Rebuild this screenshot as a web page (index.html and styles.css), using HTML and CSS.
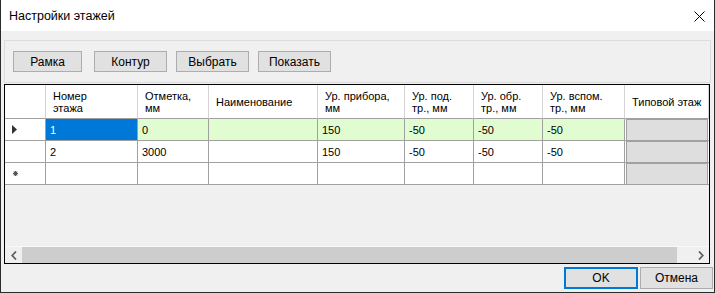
FILE: index.html
```html
<!DOCTYPE html>
<html lang="ru">
<head>
  <meta charset="UTF-8">
  <title>Настройки этажей</title>
  <link rel="stylesheet" href="styles.css">
</head>
<body>
  <div class="window">
    <div class="titlebar">
      <span class="title">Настройки этажей</span>
      <svg class="close" width="11" height="11" viewBox="0 0 11 11">
        <path d="M0.5 0.5 L10.5 10.5 M10.5 0.5 L0.5 10.5" stroke="#000" stroke-width="1" fill="none"/>
      </svg>
    </div>

    <div class="content">
      <!-- Кнопки сверху -->
      <div class="groupbox">
        <button class="btn btn-first">Рамка</button>
        <button class="btn">Контур</button>
        <button class="btn">Выбрать</button>
        <button class="btn">Показать</button>
      </div>

      <!-- Таблица этажей -->
      <div class="grid">
        <table class="floors">
          <thead>
            <tr>
              <th class="rowhead w-rh"></th>
              <th class="w-1">Номер<br>этажа</th>
              <th class="w-2">Отметка,<br>мм</th>
              <th class="w-3">Наименование</th>
              <th class="w-4">Ур. прибора,<br>мм</th>
              <th class="w-5">Ур. под.<br>тр., мм</th>
              <th class="w-6">Ур. обр.<br>тр., мм</th>
              <th class="w-7">Ур. вспом.<br>тр., мм</th>
              <th class="w-8">Типовой этаж</th>
            </tr>
          </thead>
          <tbody>
            <tr class="row-current">
              <td class="rowhead">
                <svg width="5" height="9" viewBox="0 0 5 9"><path d="M0 0 L5 4.5 L0 9 Z" fill="#333"/></svg>
              </td>
              <td class="selected">1</td>
              <td>0</td>
              <td></td>
              <td>150</td>
              <td>-50</td>
              <td>-50</td>
              <td>-50</td>
              <td class="flag"><div class="flag-box"></div></td>
            </tr>
            <tr>
              <td class="rowhead"></td>
              <td>2</td>
              <td>3000</td>
              <td></td>
              <td>150</td>
              <td>-50</td>
              <td>-50</td>
              <td>-50</td>
              <td class="flag"><div class="flag-box"></div></td>
            </tr>
            <tr>
              <td class="rowhead">
                <svg width="5" height="5" viewBox="0 0 5 5"><path d="M2.5 0 V5 M0 2.5 H5 M0.7 0.7 L4.3 4.3 M4.3 0.7 L0.7 4.3" stroke="#555" stroke-width="1.1"/></svg>
              </td>
              <td></td>
              <td></td>
              <td></td>
              <td></td>
              <td></td>
              <td></td>
              <td></td>
              <td class="flag"><div class="flag-box"></div></td>
            </tr>
          </tbody>
        </table>
        <div class="grid-empty"></div>
        <div class="hscroll">
          <div class="arrow">
            <svg width="6" height="9" viewBox="0 0 6 9"><path d="M5 0.5 L1.2 4.5 L5 8.5" stroke="#606060" stroke-width="1.8" fill="none"/></svg>
          </div>
          <div class="thumb"></div>
          <div class="track"></div>
          <div class="arrow">
            <svg width="6" height="9" viewBox="0 0 6 9"><path d="M1 0.5 L4.8 4.5 L1 8.5" stroke="#606060" stroke-width="1.8" fill="none"/></svg>
          </div>
        </div>
      </div>

      <div class="footer">
        <button class="btn btn-ok">OK</button>
        <button class="btn btn-cancel">Отмена</button>
      </div>
    </div>
  </div>
</body>
</html>
```

FILE: styles.css
```css
* {
  box-sizing: border-box;
}

body {
  margin: 0;
  padding: 0;
  font-family: "Liberation Sans", Arial, sans-serif;
  color: #000;
  background: #fff;
}

.window {
  width: 715px;
  height: 293px;
  border: 1px solid #2b2b2b;
  border-top: none;
  background: #f0f0f0;
  display: flex;
  flex-direction: column;
}

.titlebar {
  height: 31px;
  flex: none;
  background: #fff;
  display: flex;
  align-items: center;
  padding: 0 9px 0 8px;
}

.title {
  font-size: 12.5px;
  padding-top: 1px;
}

.close {
  margin-left: auto;
  margin-top: 1px;
}

.content {
  flex: 1;
  padding: 9px 3px 0 3px;
  display: flex;
  flex-direction: column;
}

.groupbox {
  height: 43px;
  border: 1px solid #dcdcdc;
  display: flex;
  align-items: flex-start;
  gap: 9px;
  padding: 10px 0 0 8px;
}

.btn {
  height: 21px;
  width: 73px;
  padding: 0;
  border: 1px solid #adadad;
  background: #e1e1e1;
  font-family: "Liberation Sans", Arial, sans-serif;
  font-size: 12px;
  color: #000;
}

.btn-first {
  width: 69px;
  margin-right: 3px;
}

.grid {
  margin-top: 1px;
  margin-right: 1px;
  height: 180px;
  border: 1px solid #000;
  background: #f0f0f0;
  display: flex;
  flex-direction: column;
  overflow: hidden;
}

.floors {
  border-collapse: separate;
  border-spacing: 0;
  table-layout: fixed;
  width: 704px;
  font-size: 11px;
  line-height: 12px;
}

.floors th,
.floors td {
  padding: 0 3px 0 4px;
  text-align: left;
  vertical-align: middle;
  white-space: nowrap;
  overflow: hidden;
  background: #fff;
  border-right: 1px solid #a0a0a0;
  border-bottom: 1px solid #a0a0a0;
}

.floors th {
  height: 34px;
  font-weight: normal;
  padding-left: 7px;
  border-right-color: #d4d4d4;
  border-bottom-color: #a0a0a0;
}

.floors td {
  height: 22px;
}

.w-rh { width: 41px; }
.w-1 { width: 92px; }
.w-2 { width: 71px; }
.w-3 { width: 109px; }
.w-4 { width: 87px; }
.w-5 { width: 69px; }
.w-6 { width: 69px; }
.w-7 { width: 82px; }
.w-8 { width: 84px; }

.floors .rowhead {
  padding: 0 0 0 7px;
}

.floors td.rowhead svg {
  display: block;
}

.floors tr:last-child td.rowhead svg {
  margin-left: 1px;
}

.row-current td {
  background: #e0fcd0;
}

.floors .row-current td.rowhead {
  background: #fff;
}

.floors td.selected {
  background: #0078d7;
  color: #fff;
}

.floors td.flag {
  padding: 0 1px 0 1px;
  border-right: none;
  background: #fff;
}

.flag-box {
  height: 21px;
  border: 1px solid #a0a0a0;
  border-bottom: none;
  background: #dedede;
}

.grid-empty {
  flex: 1;
}

.hscroll {
  height: 17px;
  flex: none;
  border-top: 1px solid #f9f9f9;
  display: flex;
}

.arrow {
  width: 17px;
  display: flex;
  align-items: center;
  justify-content: center;
}

.thumb {
  width: 655px;
  background: #cdcdcd;
}

.track {
  flex: 1;
}

.footer {
  display: flex;
  justify-content: flex-end;
  gap: 2px;
  margin-top: 3px;
  margin-right: -2px;
}

.btn-ok {
  width: 74px;
  height: 22px;
  border: 2px solid #0078d7;
}

.btn-cancel {
  width: 73px;
  height: 22px;
}
```
